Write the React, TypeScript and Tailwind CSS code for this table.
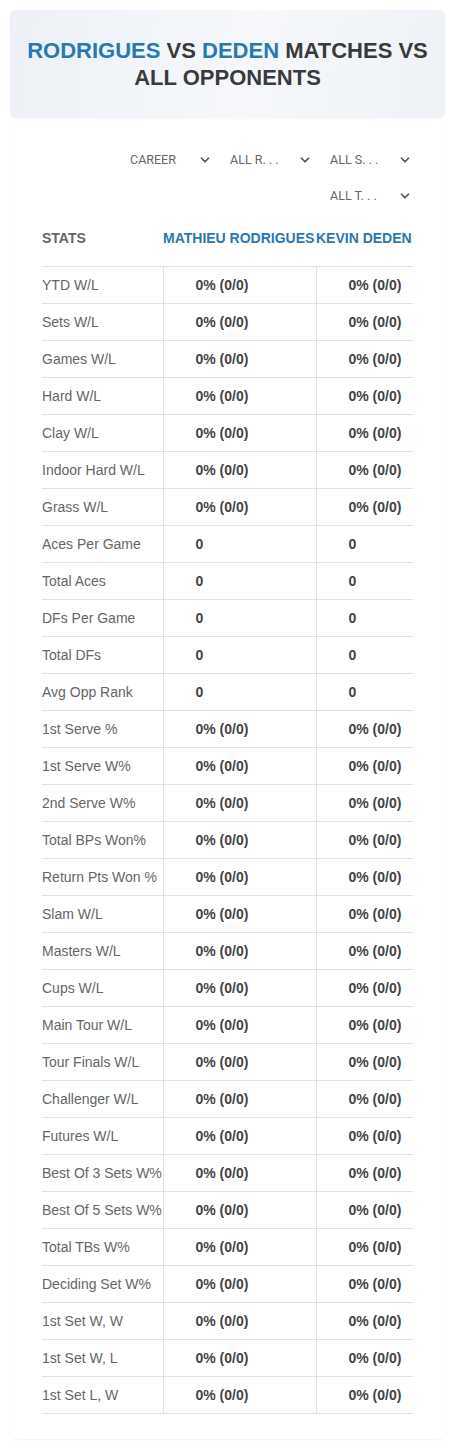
import { ChevronDown } from 'lucide-react';

const pct = '0% (0/0)';

const ROWS: [string, string][] = [
  ['YTD W/L', pct],
  ['Sets W/L', pct],
  ['Games W/L', pct],
  ['Hard W/L', pct],
  ['Clay W/L', pct],
  ['Indoor Hard W/L', pct],
  ['Grass W/L', pct],
  ['Aces Per Game', '0'],
  ['Total Aces', '0'],
  ['DFs Per Game', '0'],
  ['Total DFs', '0'],
  ['Avg Opp Rank', '0'],
  ['1st Serve %', pct],
  ['1st Serve W%', pct],
  ['2nd Serve W%', pct],
  ['Total BPs Won%', pct],
  ['Return Pts Won %', pct],
  ['Slam W/L', pct],
  ['Masters W/L', pct],
  ['Cups W/L', pct],
  ['Main Tour W/L', pct],
  ['Tour Finals W/L', pct],
  ['Challenger W/L', pct],
  ['Futures W/L', pct],
  ['Best Of 3 Sets W%', pct],
  ['Best Of 5 Sets W%', pct],
  ['Total TBs W%', pct],
  ['Deciding Set W%', pct],
  ['1st Set W, W', pct],
  ['1st Set W, L', pct],
  ['1st Set L, W', pct],
];

function Select({ label }: { label: string }) {
  return (
    <div className="flex h-[30px] w-[92px] items-center justify-between pl-[9px] pr-[1px] text-[12.5px] text-[#666] [font-family:Roboto,'Liberation_Sans',sans-serif]">
      <span className="whitespace-nowrap">{label}</span>
      <ChevronDown size={14} strokeWidth={3} className="shrink-0 text-[#555]" />
    </div>
  );
}

export default function App() {
  return (
    <div className="min-h-[1448px] bg-white p-[10px] [font-family:'Liberation_Sans',Arial,sans-serif]">
      <div className="rounded-[8px] bg-white pb-[25px] shadow-[0_1px_2px_rgba(0,0,0,0.05)]">
        <div className="rounded-[6px] bg-[linear-gradient(100deg,#edf1f6_0%,#f6f8fb_55%,#eef2f6_100%)] px-3 py-[27px] text-center shadow-[0_1px_2px_rgba(0,0,0,0.04)]">
          <h1 className="text-[22px] font-bold leading-[27px] text-[#3a3a3a]">
            <span className="text-[#2a77b5]">RODRIGUES</span> VS{' '}
            <span className="text-[#2a77b5]">DEDEN</span> MATCHES VS ALL OPPONENTS
          </h1>
        </div>

        <div className="px-[32px]">
          <div className="mt-[27px] flex flex-wrap justify-end gap-x-[8px] gap-y-[6px]">
            <Select label="CAREER" />
            <Select label="ALL R. . ." />
            <Select label="ALL S. . ." />
            <Select label="ALL T. . ." />
          </div>

          <table className="w-full table-fixed border-collapse text-[14px]">
            <colgroup>
              <col className="w-[121px]" />
              <col className="w-[153px]" />
              <col />
            </colgroup>
            <thead>
              <tr className="h-[55px] border-b border-[#dfe2e5]">
                <th className="p-0 text-left font-bold text-[#666]">STATS</th>
                <th className="whitespace-nowrap p-0 text-left font-bold text-[#2a77b5]">MATHIEU RODRIGUES</th>
                <th className="whitespace-nowrap p-0 text-left font-bold text-[#2a77b5]">KEVIN DEDEN</th>
              </tr>
            </thead>
            <tbody>
              {ROWS.map(([label, val]) => (
                <tr key={label} className="h-[37px] border-b border-[#dfe2e5]">
                  <td className="whitespace-nowrap border-r border-[#dfe2e5] p-0 pt-[1px] text-[#666]">{label}</td>
                  <td className="border-r border-[#dfe2e5] p-0 pl-[32px] pt-[1px] font-bold text-[#444]">{val}</td>
                  <td className="p-0 pl-[32px] pt-[1px] font-bold text-[#444]">{val}</td>
                </tr>
              ))}
            </tbody>
          </table>
        </div>
      </div>
    </div>
  );
}
